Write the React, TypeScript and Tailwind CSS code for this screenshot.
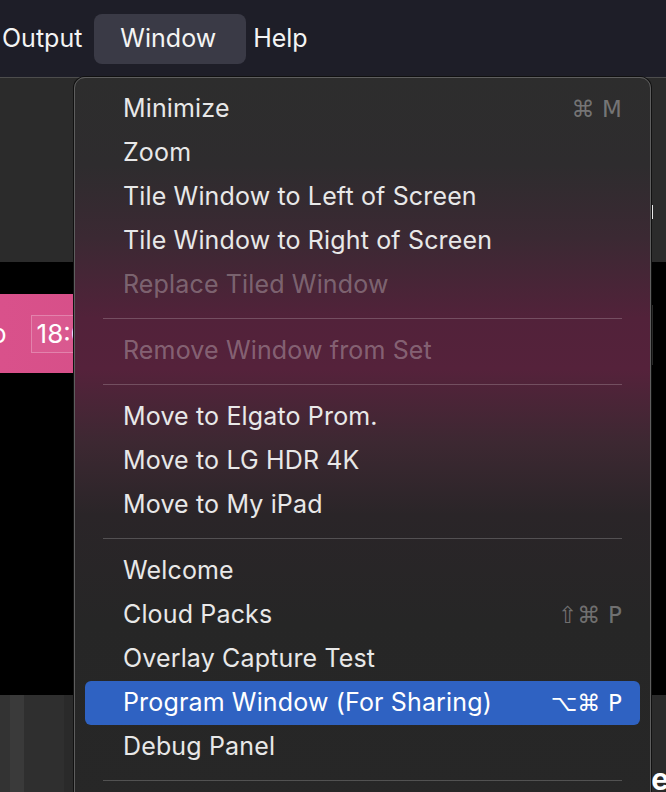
import React from 'react';

type Item = { label: string; shortcut?: string; disabled?: boolean; active?: boolean } | 'sep';

const items: Item[] = [
  { label: 'Minimize', shortcut: '⌘ M' },
  { label: 'Zoom' },
  { label: 'Tile Window to Left of Screen' },
  { label: 'Tile Window to Right of Screen' },
  { label: 'Replace Tiled Window', disabled: true },
  'sep',
  { label: 'Remove Window from Set', disabled: true },
  'sep',
  { label: 'Move to Elgato Prom.' },
  { label: 'Move to LG HDR 4K' },
  { label: 'Move to My iPad' },
  'sep',
  { label: 'Welcome' },
  { label: 'Cloud Packs', shortcut: '⇧⌘ P' },
  { label: 'Overlay Capture Test' },
  { label: 'Program Window (For Sharing)', shortcut: '⌥⌘ P', active: true },
  { label: 'Debug Panel' },
  'sep',
];

const App = () => {
  return (
    <div className="relative w-[666px] h-[792px] overflow-hidden bg-black font-['Inter','Noto_Sans',sans-serif] flex flex-col">
      {/* app menu bar */}
      <header className="h-[77px] shrink-0 bg-[#1e1e28] flex items-center text-[25px] text-[#f4f4f4]">
        <span className="ml-[2px]">Output</span>
        <span className="ml-[12px] h-[50px] pl-[26px] pr-[30px] flex items-center rounded-lg bg-[#3a3a46]">Window</span>
        <span className="ml-[7px]">Help</span>
      </header>

      {/* toolbar behind the menu */}
      <div className="h-[185px] shrink-0 bg-[#2b2b2b] border-t border-[#4d4d4d] flex justify-end">
        <div className="mt-[127px] mr-[13px] w-[3px] h-[14px] bg-white/90" />
      </div>
      <div className="h-[32px] shrink-0 bg-black" />

      {/* pink clip bar */}
      <div className="h-[79px] shrink-0 flex">
        <div className="w-[600px] bg-gradient-to-r from-[#d9518b] to-[#c9477d] flex items-center text-[26px] text-white">
          <span className="-ml-[9px]">o</span>
          <span className="ml-[24px] h-[38px] pl-[5px] pr-[4px] flex items-center border border-white/25 bg-white/5">18:00</span>
        </div>
        <div className="flex-1 flex justify-end">
          <div className="mt-[11px] mr-[13px] w-[2px] h-[60px] bg-[#2a2a2a]" />
        </div>
      </div>
      <div className="h-[322px] shrink-0 bg-black" />

      {/* timeline area */}
      <div className="flex-1 bg-[#2a2a2a] flex">
        <div className="w-[10px] bg-[#333]" />
        <div className="w-[14px] bg-[#3a3a3a]" />
        <div className="w-[40px] bg-[#2f2f2f]" />
        <div className="flex-1 flex items-end justify-end">
          <span className="text-[30px] leading-none font-bold text-white -mb-[2px] -mr-[3px]">e</span>
        </div>
      </div>

      {/* Window dropdown menu */}
      <div className="absolute left-[74px] top-[77px] w-[577px] h-[730px] rounded-t-[11px] border border-[#5e5e5e] bg-[linear-gradient(180deg,#2d2d2d_0%,#2e2c2e_12%,#3b2933_22%,#52223a_33%,#55223b_40%,#3d2832_50%,#2a2528_60%,#262626_75%,#272727_100%)] pt-[9px] shadow-[0_0_0_1px_#111]">
        {items.map((item, i) =>
          item === 'sep' ? (
            <div key={i} className="h-[22px] flex items-center px-[28px]">
              <div className="h-px w-full bg-white/20" />
            </div>
          ) : (
            <div
              key={i}
              className={`mx-[10px] h-[44px] pl-[38px] pr-[18px] flex items-center justify-between rounded-md text-[25px] tracking-[0.15px] ${
                item.active ? 'bg-[#2f62c2] text-white' : item.disabled ? 'text-white/30' : 'text-[#e8e8e8]'
              }`}
            >
              <span>{item.label}</span>
              {item.shortcut && (
                <span className={`font-['DejaVu_Sans',sans-serif] text-[23px] ${item.active ? 'text-white' : 'text-white/35'}`}>
                  {item.shortcut}
                </span>
              )}
            </div>
          )
        )}
      </div>
    </div>
  );
};

export default App;
